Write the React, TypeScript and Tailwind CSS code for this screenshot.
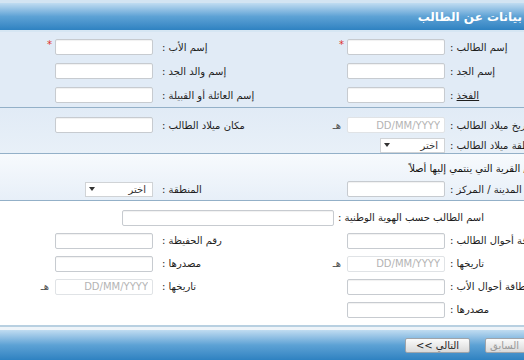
import React from "react";

const TextInput: React.FC<{ w?: string; date?: boolean }> = ({ w = "w-[98px]", date }) => (
  <input
    className={`${w} h-[16px] rounded-[2px] border bg-white px-[4px] text-[10px] outline-none ${
      date
        ? "border-[#e0e3e6] placeholder:text-[#b4b4b4]"
        : "border-[#c7cbd0] shadow-[inset_0_1px_1px_rgba(0,0,0,0.06)]"
    }`}
    placeholder={date ? "DD/MM/YYYY" : ""}
  />
);

const Select: React.FC<{ w?: string }> = ({ w = "w-[65px]" }) => (
  <div
    className={`${w} h-[15px] border border-[#d0d3d6] bg-white flex items-center justify-between pr-[6px] pl-[3px] text-[10px] text-[#333]`}
  >
    <span>اختر</span>
    <svg width="6" height="4" viewBox="0 0 6 4">
      <path d="M0 0h6L3 4z" fill="#333" />
    </svg>
  </div>
);

const Star = () => (
  <span className="mr-[3px] relative -top-[3px] text-[10px] text-[#e0302a]">*</span>
);

const Hijri = () => <span className="mr-[6px] text-[10px] text-[#555]">هـ</span>;

const RightCell: React.FC<{ label: React.ReactNode; children?: React.ReactNode }> = ({
  label,
  children,
}) => (
  <div className="w-[298px] flex items-center">
    <div className="w-[110px] text-left whitespace-nowrap">{label} :</div>
    <div className="mr-[5px] flex items-center">{children}</div>
  </div>
);

const LeftCell: React.FC<{ label?: React.ReactNode; children?: React.ReactNode }> = ({
  label,
  children,
}) => (
  <div className="w-[262px] flex items-center">
    {label && (
      <>
        <div className="w-[100px] text-left whitespace-nowrap">{label} :</div>
        <div className="mr-[9px] flex items-center">{children}</div>
      </>
    )}
  </div>
);

const btn =
  "w-[65px] h-[15px] border border-[#9ea4aa] rounded-[2px] bg-gradient-to-b from-[#fbfbfb] to-[#d9d9d9] text-[10px] flex items-center justify-center";

export default function App() {
  return (
    <div className="w-[524px] h-[360px] overflow-hidden bg-white">
      <div dir="rtl" className="w-[560px] font-['DejaVu_Sans',sans-serif] text-[10px] text-[#1e1e1e]">
        {/* header */}
        <div className="h-[3px] bg-[#d3e4f2]" />
        <div className="h-[27px] bg-gradient-to-b from-[#c0dcf1] via-[#5da2d5] to-[#2e82c1] flex items-center pr-[38px]">
          <span className="text-white font-bold text-[12px]">بيانات عن الطالب</span>
        </div>
        <div className="h-[2px] bg-[#d6e6f3]" />

        {/* names */}
        <div className="bg-[#e1ebf6] pt-[3px] border-b border-[#93b0c8]">
          <div className="h-[24px] flex">
            <RightCell label="إسم الطالب">
              <TextInput />
              <Star />
            </RightCell>
            <LeftCell label="إسم الأب">
              <TextInput />
              <Star />
            </LeftCell>
          </div>
          <div className="h-[24px] flex">
            <RightCell label="إسم الجد">
              <TextInput />
            </RightCell>
            <LeftCell label="إسم والد الجد">
              <TextInput />
            </LeftCell>
          </div>
          <div className="h-[24px] flex">
            <RightCell label={<span className="underline">الفخذ</span>}>
              <TextInput />
            </RightCell>
            <LeftCell label="إسم العائلة أو القبيلة">
              <TextInput />
            </LeftCell>
          </div>
        </div>

        {/* birth */}
        <div className="bg-gradient-to-b from-[#e1ebf6] to-[#e8f0f8] pt-[8px] border-b border-[#93b0c8]">
          <div className="h-[18px] flex">
            <RightCell label="تاريخ ميلاد الطالب">
              <TextInput date />
              <Hijri />
            </RightCell>
            <LeftCell label="مكان ميلاد الطالب">
              <TextInput />
            </LeftCell>
          </div>
          <div className="mt-[3px] h-[16px] flex">
            <RightCell label="منطقة ميلاد الطالب">
              <Select />
            </RightCell>
            <LeftCell />
          </div>
        </div>

        {/* origin */}
        <div className="bg-gradient-to-b from-[#f7fafd] to-[#e7eff8] pt-[6px] pb-[2px] border-b border-[#93b0c8]">
          <div className="h-[16px] flex items-center pr-[2px] text-[#111]">
            المدينة / القرية التي ينتمي إليها أصلاً
          </div>
          <div className="mt-[4px] h-[18px] flex">
            <RightCell label="المدينة / المركز">
              <TextInput />
            </RightCell>
            <LeftCell label="المنطقة">
              <Select w="w-[68px]" />
            </LeftCell>
          </div>
        </div>

        {/* ids */}
        <div className="bg-white pt-[5px] pb-[4px]">
          <div className="h-[23px] flex items-center">
            <div className="w-[222px] text-left whitespace-nowrap">اسم الطالب حسب الهوية الوطنية :</div>
            <div className="mr-[4px]">
              <TextInput w="w-[212px]" />
            </div>
          </div>
          <div className="h-[23px] flex">
            <RightCell label="بطاقة أحوال الطالب">
              <TextInput />
            </RightCell>
            <LeftCell label="رقم الحفيظة">
              <TextInput />
            </LeftCell>
          </div>
          <div className="h-[23px] flex">
            <RightCell label="تاريخها">
              <TextInput date />
              <Hijri />
            </RightCell>
            <LeftCell label="مصدرها">
              <TextInput />
            </LeftCell>
          </div>
          <div className="h-[23px] flex">
            <RightCell label="بطاقة أحوال الأب">
              <TextInput />
            </RightCell>
            <LeftCell label="تاريخها">
              <TextInput date />
              <Hijri />
            </LeftCell>
          </div>
          <div className="h-[23px] flex">
            <RightCell label="مصدرها">
              <TextInput />
            </RightCell>
            <LeftCell />
          </div>
        </div>

        {/* footer */}
        <div className="h-[2px] bg-[#b8d0e1]" />
        <div className="h-[3px] bg-[#eef4f9]" />
        <div className="h-[30px] bg-gradient-to-b from-[#c0dcf1] via-[#5da2d5] to-[#2e82c1] flex items-center pr-[10px] gap-[15px]">
          <button className={`${btn} pr-[26px] text-[#9a9a9a]`}>السابق</button>
          <button className={`${btn} text-[#222]`}>التالي &gt;&gt;</button>
        </div>
      </div>
    </div>
  );
}
